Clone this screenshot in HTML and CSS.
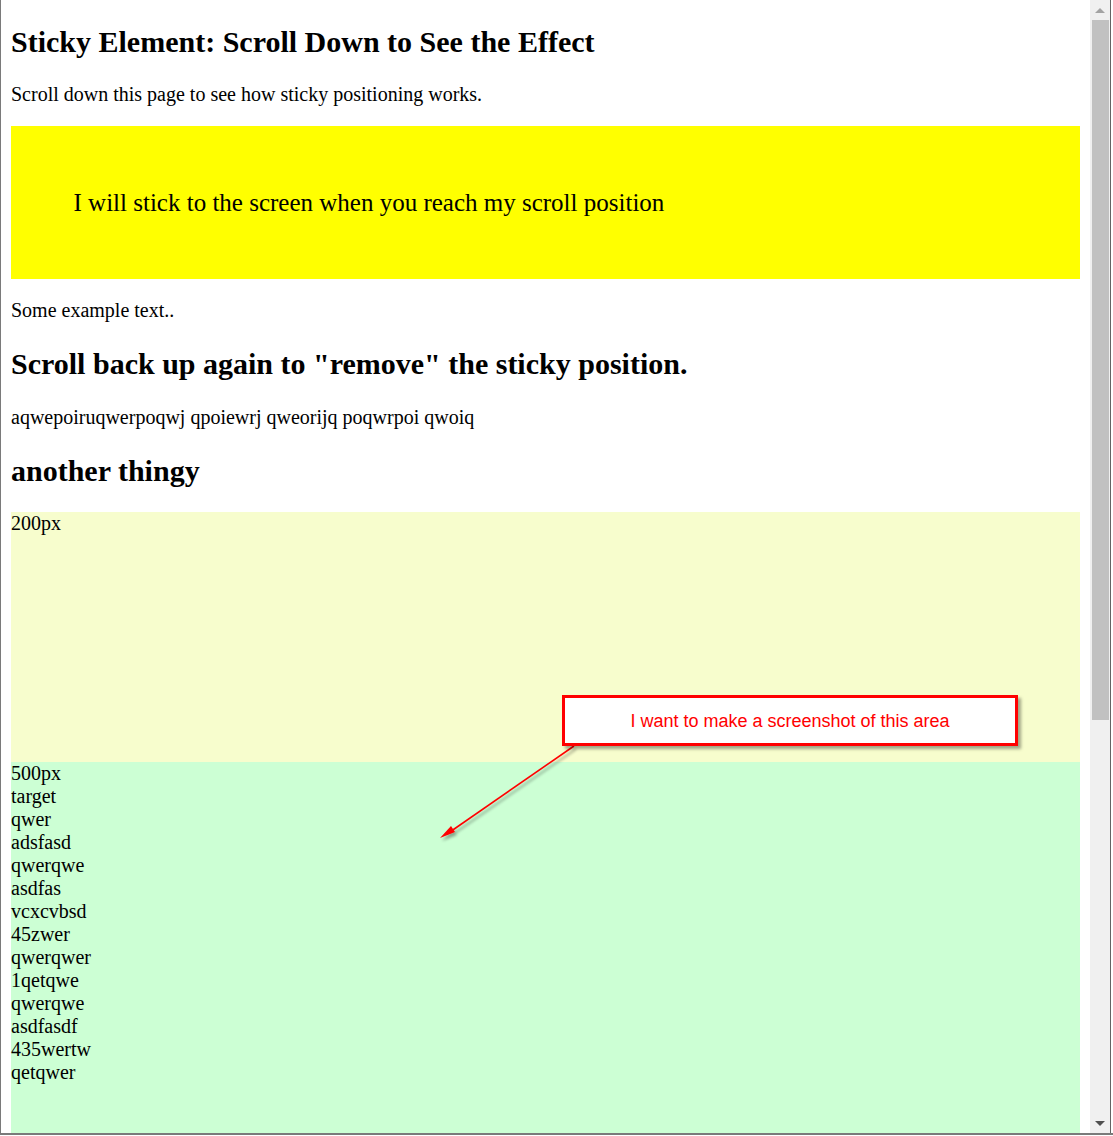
FILE: index.html
```html
<!DOCTYPE html>
<html>
<head>
<meta charset="utf-8">
<link rel="stylesheet" href="styles.css">
</head>
<body>
<div class="frame">
  <div class="viewport">
    <div class="page">
      <h2 class="title">Sticky Element: Scroll Down to See the Effect</h2>
      <p>Scroll down this page to see how sticky positioning works.</p>
      <div class="sticky">I will stick to the screen when you reach my scroll position</div>
      <p>Some example text..</p>
      <h2>Scroll back up again to "remove" the sticky position.</h2>
      <p>aqwepoiruqwerpoqwj qpoiewrj qweorijq poqwrpoi qwoiq</p>
      <h2 class="last">another thingy</h2>
      <div class="box200">200px</div>
      <div class="box500">
        <div>500px</div>
        <div>target</div>
        <div>qwer</div>
        <div>adsfasd</div>
        <div>qwerqwe</div>
        <div>asdfas</div>
        <div>vcxcvbsd</div>
        <div>45zwer</div>
        <div>qwerqwer</div>
        <div>1qetqwe</div>
        <div>qwerqwe</div>
        <div>asdfasdf</div>
        <div>435wertw</div>
        <div>qetqwer</div>
      </div>
    </div>
    <svg class="arrow" width="1089" height="1133" viewBox="0 0 1089 1133">
      <defs>
        <filter id="sh" x="-20%" y="-20%" width="140%" height="140%">
          <feGaussianBlur in="SourceAlpha" stdDeviation="1.5"/>
          <feOffset dx="2" dy="3" result="b"/>
          <feComponentTransfer><feFuncA type="linear" slope="0.35"/></feComponentTransfer>
          <feMerge><feMergeNode/><feMergeNode in="SourceGraphic"/></feMerge>
        </filter>
      </defs>
      <g filter="url(#sh)">
        <line x1="573" y1="746" x2="446" y2="834" stroke="#ff0000" stroke-width="1.6"/>
        <polygon points="439,838 450,826 454,832" fill="#ff0000"/>
      </g>
    </svg>
    <div class="callout">I want to make a screenshot of this area</div>
  </div>
  <div class="scrollbar">
    <div class="sb-btn"><span class="tri-up"></span></div>
    <div class="sb-track"><div class="sb-thumb"></div></div>
    <div class="sb-btn"><span class="tri-down"></span></div>
  </div>
  <div class="edge"></div>
</div>
</body>
</html>
```

FILE: styles.css
```css
html, body {
  margin: 0;
  padding: 0;
  background: #ffffff;
}

.frame {
  width: 1113px;
  height: 1135px;
  box-sizing: border-box;
  border-left: 1px solid #7a7a7a;
  border-bottom: 2px solid #7a7a7a;
  display: flex;
  overflow: hidden;
}

.viewport {
  position: relative;
  width: 1089px;
  height: 1133px;
  overflow: hidden;
  flex: none;
}

.page {
  padding: 10px;
  font-family: "Liberation Serif", "Times New Roman", serif;
  font-size: 20px;
  color: #000;
}

.page h2 {
  font-size: 30px;
  font-weight: bold;
  margin: 25px 0;
}

.page h2.title {
  margin-top: 15px;
  margin-bottom: 24px;
}

.page h2.last {
  margin-bottom: 24px;
}

.page p {
  margin: 20px 0;
}

.sticky {
  background: #ffff00;
  padding: 62.5px;
  font-size: 25px;
}

.box200 {
  height: 250px;
  background: #f7fdcd;
}

.box500 {
  height: 625px;
  background: #ccffd4;
}

.callout {
  position: absolute;
  left: 561px;
  top: 695px;
  width: 456px;
  height: 51px;
  box-sizing: border-box;
  border: 3px solid #ff0000;
  background: #ffffff;
  box-shadow: 3px 3px 3px rgba(0, 0, 0, 0.35);
  font-family: "Liberation Sans", Arial, sans-serif;
  font-size: 18px;
  color: #ff0000;
  display: flex;
  align-items: center;
  justify-content: center;
  padding-top: 1px;
}

.arrow {
  position: absolute;
  left: 0;
  top: 0;
  pointer-events: none;
}

.scrollbar {
  width: 20px;
  height: 1133px;
  background: #f0f0f0;
  display: flex;
  flex-direction: column;
  flex: none;
}

.sb-btn {
  height: 20px;
  display: flex;
  align-items: center;
  justify-content: center;
  flex: none;
}

.tri-up {
  width: 0;
  height: 0;
  border-left: 5px solid transparent;
  border-right: 5px solid transparent;
  border-bottom: 5px solid #a3a3a3;
}

.tri-down {
  width: 0;
  height: 0;
  border-left: 5px solid transparent;
  border-right: 5px solid transparent;
  border-top: 5px solid #505050;
}

.sb-track {
  flex: 1;
  padding: 0 1px 0 2px;
}

.sb-thumb {
  height: 700px;
  background: #c1c1c1;
}

.edge {
  width: 3px;
  height: 1133px;
  flex: none;
  box-sizing: border-box;
  border-left: 1px solid #646464;
  background: #ffffff;
}
```
